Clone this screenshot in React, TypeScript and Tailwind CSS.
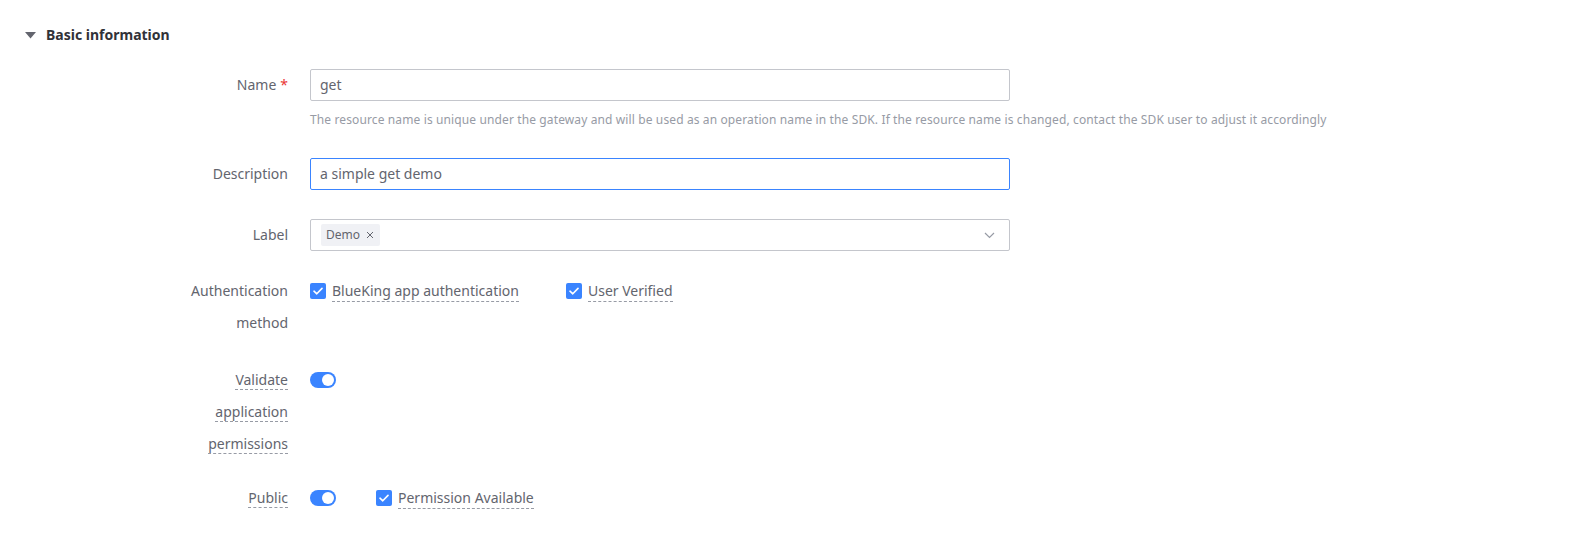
import React from 'react';

const font = { fontFamily: '"Noto Sans", "Open Sans", sans-serif' };

function Check({ label }: { label: string }) {
  return (
    <label className="inline-flex items-center h-8 cursor-pointer">
      <span className="w-4 h-4 rounded-[2px] bg-[#3a84ff] flex items-center justify-center">
        <svg width="10" height="8" viewBox="0 0 10 8" fill="none">
          <path d="M1 4.2 L3.8 6.8 L9 1.4" stroke="#fff" strokeWidth="1.6" strokeLinecap="round" strokeLinejoin="round" />
        </svg>
      </span>
      <span className="ml-[6px] leading-[20px] border-b border-dashed border-[#979ba5] text-[#63656e]">{label}</span>
    </label>
  );
}

function Toggle() {
  return (
    <span className="inline-flex items-center h-8">
      <span className="w-[26px] h-4 rounded-full bg-[#3a84ff] relative">
        <span className="absolute right-[2px] top-[2px] w-3 h-3 rounded-full bg-white" />
      </span>
    </span>
  );
}

function Row({ label, children, className = '' }: { label: React.ReactNode; children: React.ReactNode; className?: string }) {
  return (
    <div className={`flex ${className}`}>
      <div className="w-[288px] text-right leading-8 text-[#63656e] shrink-0">{label}</div>
      <div className="ml-[22px] w-[700px]">{children}</div>
    </div>
  );
}

const tip = (text: string) => (
  <span className="border-b border-dashed border-[#979ba5]">{text}</span>
);

const tipLine = (text: string) => (
  <span className="h-8 inline-flex items-center">
    <span className="leading-[20px]">{tip(text)}</span>
  </span>
);

export default function App() {
  return (
    <div className="w-[1593px] h-[544px] bg-white text-sm text-[#63656e]" style={font}>
      {/* section header */}
      <div className="pt-[24px] pl-[25px] flex items-center h-[46px]">
        <svg width="11" height="7" viewBox="0 0 11 7" className="mt-[1px]">
          <path d="M0 0 L11 0 L5.5 6.5 Z" fill="#63656e" />
        </svg>
        <span className="ml-[10px] font-bold text-[#313238] leading-[22px]">Basic information</span>
      </div>

      <Row
        className="mt-[23px]"
        label={
          <span>
            Name<span className="text-[#ea3636] ml-[4px]">*</span>
          </span>
        }
      >
        <div className="h-8 border border-[#c4c6cc] rounded-[2px] px-[9px] flex items-center text-[#63656e]">get</div>
        <div className="mt-[9px] text-xs leading-[20px] tracking-[0.12px] text-[#979ba5] whitespace-nowrap">
          The resource name is unique under the gateway and will be used as an operation name in the SDK. If the resource name is changed, contact the SDK user to adjust it accordingly
        </div>
      </Row>

      <Row className="mt-[28px]" label="Description">
        <div className="h-8 border border-[#3a84ff] rounded-[2px] px-[9px] flex items-center text-[#63656e]">a simple get demo</div>
      </Row>

      <Row className="mt-[29px]" label="Label">
        <div className="h-8 border border-[#c4c6cc] rounded-[2px] px-[10px] flex items-center justify-between">
          <span className="h-[22px] bg-[#f0f1f5] rounded-[2px] pl-[5px] pr-[6px] flex items-center text-xs text-[#63656e]">
            Demo
            <svg width="8" height="8" viewBox="0 0 8 8" className="ml-[6px]">
              <path d="M1 1 L7 7 M7 1 L1 7" stroke="#63656e" strokeWidth="1" />
            </svg>
          </span>
          <svg width="11" height="7" viewBox="0 0 11 7" className="mr-[4px]">
            <path d="M1 1 L5.5 5.5 L10 1" stroke="#979ba5" strokeWidth="1.2" fill="none" />
          </svg>
        </div>
      </Row>

      <Row
        className="mt-[24px]"
        label={
          <>
            Authentication
            <br />
            method
          </>
        }
      >
        <div className="flex items-center">
          <Check label="BlueKing app authentication" />
          <span className="ml-[47px]">
            <Check label="User Verified" />
          </span>
        </div>
      </Row>

      <Row
        className="mt-[25px]"
        label={
          <div className="flex flex-col items-end">
            {tipLine('Validate')}
            {tipLine('application')}
            {tipLine('permissions')}
          </div>
        }
      >
        <Toggle />
      </Row>

      <Row className="mt-[22px]" label={tipLine('Public')}>
        <div className="flex items-center">
          <Toggle />
          <span className="ml-[40px]">
            <Check label="Permission Available" />
          </span>
        </div>
      </Row>
    </div>
  );
}
